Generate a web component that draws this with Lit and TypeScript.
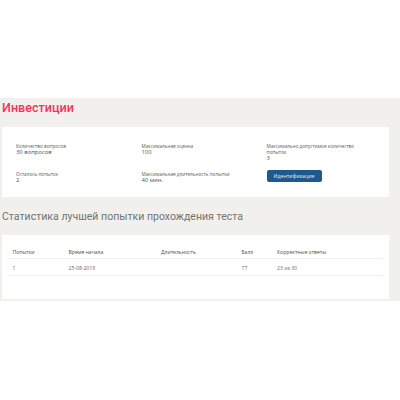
import { LitElement, html, css } from "lit";
import { customElement } from "lit/decorators.js";

@customElement("app-root")
export class AppRoot extends LitElement {
  static styles = css`
    :host { display: block; width: 400px; height: 400px; background: #fff; font-family: "Open Sans", "Liberation Sans", sans-serif; overflow: hidden; }
    .band { margin-top: 98px; height: 203px; background: #f1f0ed; padding: 0 11px 0 2px; box-sizing: border-box; display: flex; flex-direction: column; }
    h1 { margin: 0; height: 29px; padding-top: 1px; box-sizing: border-box; font-family: Roboto, sans-serif; font-size: 12.6px; line-height: 18px; font-weight: 500; color: #f5325c; }
    .card { background: #fff; box-sizing: border-box; }
    .info { height: 70px; padding: 16px 14px 0; display: grid; grid-template-columns: 125.5px 125px 1fr; grid-template-rows: 28px 26px; color: #5a5a60; font-size: 4.7px; line-height: 6px; }
    .info .v { color: #3a5572; font-size: 5.9px; }
    .cell { display: flex; flex-direction: column; }
    button { all: unset; display: block; width: 55px; height: 12px; background: #1c5a8e; border-radius: 2px; color: #e8eef4; font-size: 5.2px; font-weight: 400; line-height: 12px; text-align: center; margin-top: -1px; }
    h2 { margin: 0; height: 38px; padding-top: 12px; box-sizing: border-box; font-family: Roboto, sans-serif; font-size: 10.55px; line-height: 16px; font-weight: 400; color: #737372; }
    .table { height: 64px; padding: 8px 6px 0; }
    .row { display: grid; grid-template-columns: 56px 92.5px 80.5px 35.5px 1fr; padding-left: 4.5px; font-size: 5.1px; color: #66666a; border-bottom: 1px solid #efeeeb; align-items: center; box-sizing: border-box; }
    .head { height: 16px; padding-top: 3px; color: #4c4c51; }
    .body { height: 17px; padding-top: 1px; }
  `;
  render() {
    return html`
      <div class="band">
        <h1>Инвестиции</h1>
        <div class="card info">
          <div class="cell"><span>Количество вопросов</span><span class="v">30 вопросов</span></div>
          <div class="cell"><span>Максимальная оценка</span><span class="v">100</span></div>
          <div class="cell"><span>Максимально допустимое количество<br />попыток</span><span class="v">3</span></div>
          <div class="cell"><span>Осталось попыток</span><span class="v">2</span></div>
          <div class="cell"><span>Максимальная длительность попытки</span><span class="v">40 мин.</span></div>
          <div class="cell"><button>Идентификация</button></div>
        </div>
        <h2>Статистика лучшей попытки прохождения теста</h2>
        <div class="card table">
          <div class="row head"><span>Попытки</span><span>Время начала</span><span>Длительность</span><span>Балл</span><span>Корректные ответы</span></div>
          <div class="row body"><span>1</span><span>25-08-2019</span><span></span><span>77</span><span>23 из 30</span></div>
        </div>
      </div>
    `;
  }
}
